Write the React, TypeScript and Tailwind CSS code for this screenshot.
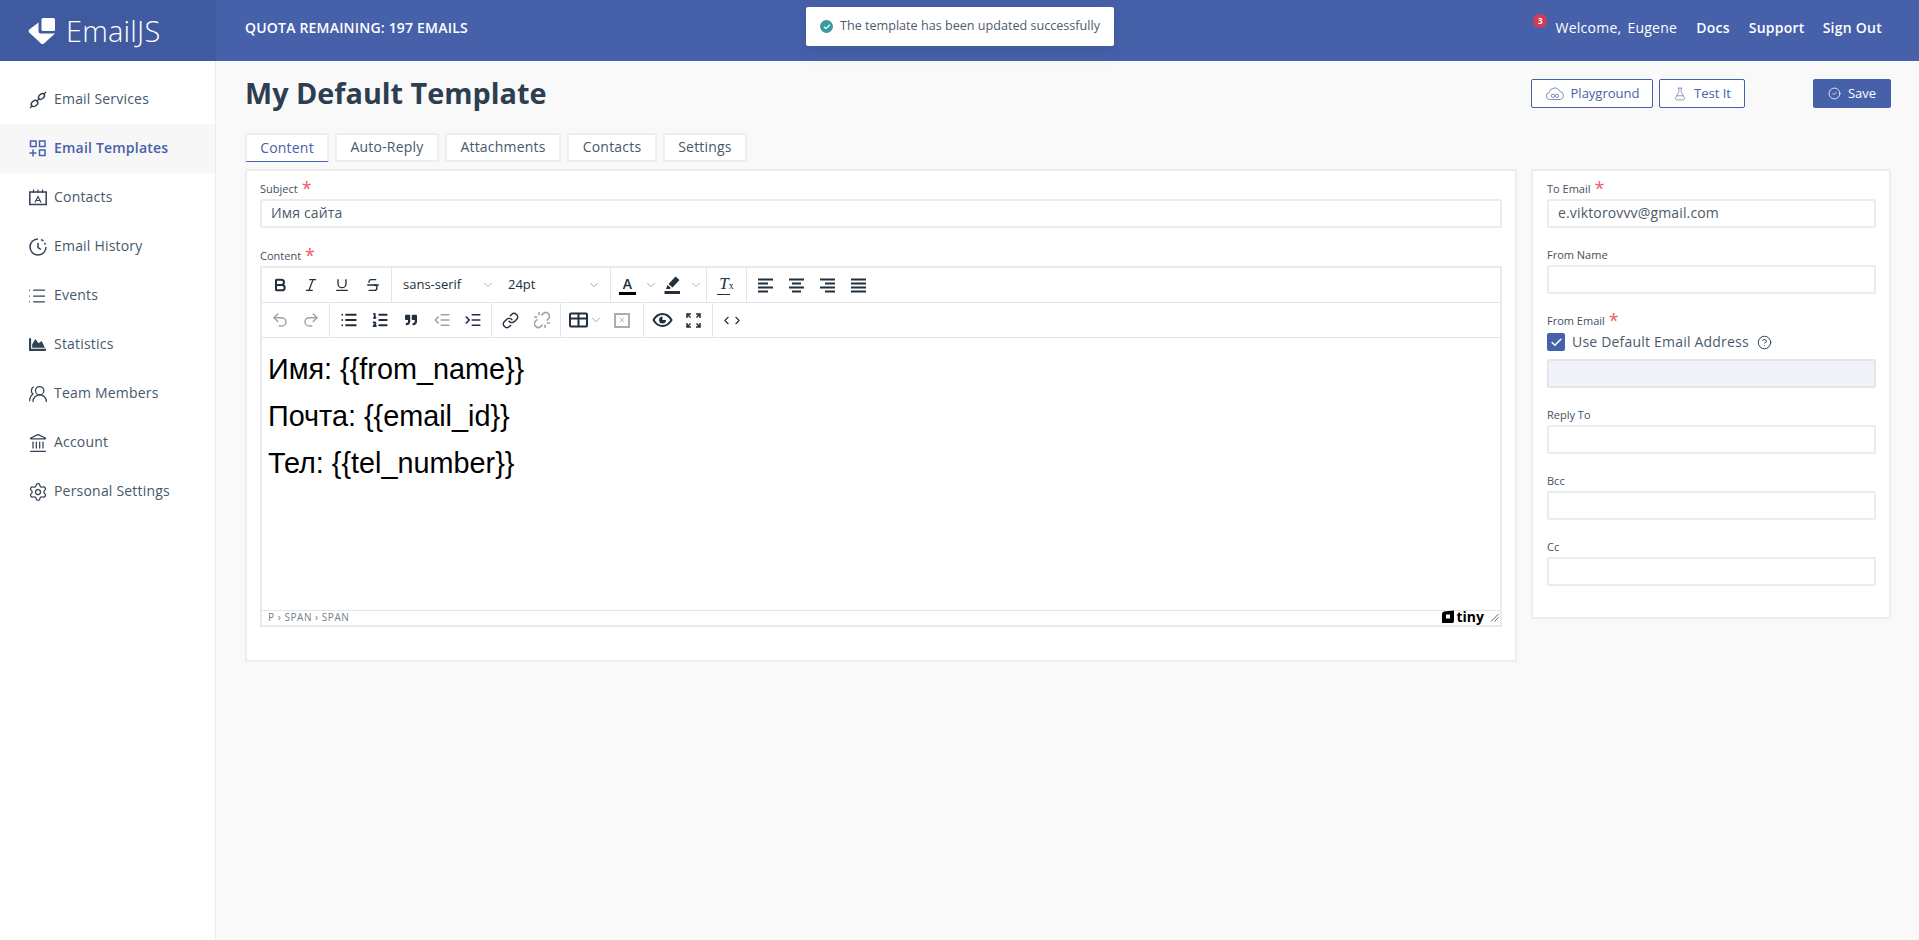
import React from 'react';
import {
  Bold, Check, CheckCircle2, ChevronDown, ChevronLeft, ChevronRight, FlaskConical, HelpCircle, IndentDecrease,
  IndentIncrease, Italic, Landmark, Link, List, ListOrdered, Redo2, Settings, Strikethrough, Underline, Undo2, Unlink,
  UsersRound, X,
} from 'lucide-react';
import { FaChartArea, FaQuoteRight } from 'react-icons/fa';

const EmailServicesIcon = () => (
  <svg width="18" height="18" viewBox="0 0 18 18" fill="none" stroke="currentColor" strokeWidth="1.400">
    <path d="M1 17l2.500-2.500M14.500 3.500L17 1M7.500 10.500l3-3" />
    <ellipse cx="12.500" cy="5.500" rx="3.400" ry="2.300" transform="rotate(-40 12.500 5.500)" />
    <ellipse cx="5.500" cy="12.500" rx="3.600" ry="2.600" transform="rotate(-40 5.500 12.500)" />
  </svg>
);

const TemplatesIcon = () => (
  <svg width="17" height="17" viewBox="0 0 17 17" fill="none" stroke="currentColor" strokeWidth="1.500">
    <rect x="1.500" y="1" width="5.500" height="5.500" />
    <rect x="10.500" y="1" width="5.500" height="5.500" />
    <rect x="10.500" y="10" width="5.500" height="5.500" />
    <path d="M0.500 13h7M4 9.500V16.500" />
  </svg>
);

const ContactsIcon = () => (
  <svg width="18" height="17" viewBox="0 0 18 17" fill="none" stroke="currentColor" strokeWidth="1.500">
    <rect x="0.800" y="3" width="16.400" height="12.500" />
    <path d="M4.500 0.500v3.500M9 0.500v3.500M13.500 0.500v3.500M6 13.500l3-6 3 6M7 11.500h4" strokeWidth="1.200" />
  </svg>
);

const HistoryIcon = () => (
  <svg width="18" height="18" viewBox="0 0 18 18" fill="none" stroke="currentColor" strokeWidth="1.500">
    <path d="M9 1a8 8 0 1 0 8 8M9 5v4.500l3 2" />
    <path d="M12 1.600l2.500 1.200M15.500 5l1 1.500" />
  </svg>
);

const LogoIcon = () => (
  <svg width="28" height="28" viewBox="0 0 28 28" fill="white">
    <rect x="13.500" y="1" width="13.500" height="13" rx="1.500" />
    <path d="M10.500 5.500v8.500q0 2.500 2.500 2.500h14l-11 10q-1.500 1-3 0L1.200 15.500q-1.200-1.500 0-3z" />
  </svg>
);

const PenIcon = () => (
  <svg width="20" height="20" viewBox="0 0 20 20" fill="#222f3e">
    <path d="M12.500 1.500l4 3.500-7 7.500-4-3.500zM4.500 10l3.500 3-1.500 1H3zM1.500 16h15.500v3H1.500z" />
  </svg>
);

const TinyMark = () => (
  <svg width="14" height="14" viewBox="0 0 14 14">
    <path d="M3 1.500L13 0.500V11q0 2-2 2H1V4q0-2 2-2.500z" fill="#000" />
    <rect x="5" y="4.500" width="4" height="4" fill="#fff" />
  </svg>
);

const ResizeGrip = () => (
  <svg width="9" height="9" viewBox="0 0 9 9" stroke="#5c6b73" strokeWidth="1">
    <path d="M1 8.500L8.500 1M4.500 8.500L8.500 4.500" />
  </svg>
);

const AlignIcon = ({ rows }: { rows: [number, number][] }) => (
  <svg width="16" height="16" viewBox="0 0 16 16" fill="#222f3e">
    {rows.map(([x, w], i) => (
      <rect key={i} x={x} y={1.500 + i * 4} width={w} height="2" />
    ))}
  </svg>
);

const TableIcon = () => (
  <svg width="19" height="16" viewBox="0 0 19 16" fill="none" stroke="#222f3e" strokeWidth="2">
    <rect x="1" y="1.500" width="17" height="13" rx="1" />
    <path d="M1 6.500h17M9.500 1.500v13" />
  </svg>
);

const EyeIcon = () => (
  <svg width="21" height="16" viewBox="0 0 21 16">
    <path d="M1.500 8q3.500-6 9-6t9 6q-3.500 6-9 6t-9-6z" fill="none" stroke="#222f3e" strokeWidth="2" />
    <path d="M10.500 4.500a3.500 3.500 0 1 0 3.500 3.500h-3.500z" fill="#222f3e" />
  </svg>
);

const FullscreenIcon = () => (
  <svg width="15" height="15" viewBox="0 0 15 15" fill="none" stroke="#222f3e" strokeWidth="1.500">
    <path d="M1 5V1h4M14 5V1h-4M1 10v4h4M14 10v4h-4M1.500 1.500l3 3M13.500 1.500l-3 3M1.500 13.500l3-3M13.500 13.500l-3-3" />
  </svg>
);

const PlaygroundIcon = () => (
  <svg width="20" height="15" viewBox="0 0 20 15" fill="none" stroke="#7f8fbd" strokeWidth="1">
    <path d="M4.500 13.500a3.500 3.500 0 0 1-.5-6.900 5.800 5.800 0 0 1 11-1.100 4.100 4.100 0 0 1 .5 8z" />
    <circle cx="8" cy="9.800" r="1.700" />
    <circle cx="12" cy="9.800" r="1.700" />
  </svg>
);

const navItems = [
  { label: 'Email Services', icon: <EmailServicesIcon /> },
  { label: 'Email Templates', icon: <TemplatesIcon />, active: true },
  { label: 'Contacts', icon: <ContactsIcon /> },
  { label: 'Email History', icon: <HistoryIcon /> },
  { label: 'Events', icon: <List size={20} strokeWidth={1.500} className="-ml-[2px]" /> },
  { label: 'Statistics', icon: <FaChartArea size={17} /> },
  { label: 'Team Members', icon: <UsersRound size={20} strokeWidth={1.500} className="-ml-[1px] -scale-x-100" /> },
  { label: 'Account', icon: <Landmark size={20} strokeWidth={1.500} className="-ml-[1px]" /> },
  { label: 'Personal Settings', icon: <Settings size={20} strokeWidth={1.500} className="-ml-[1px]" /> },
];

const tabs = [
  { label: 'Content', width: 'w-[84px]' },
  { label: 'Auto-Reply', width: 'w-[104px]' },
  { label: 'Attachments', width: 'w-[116px]' },
  { label: 'Contacts', width: 'w-[90px]' },
  { label: 'Settings', width: 'w-[84px]' },
];

const Star = () => <span className="-mt-[2px] ml-1 text-[18px] leading-none text-[#ef5b6c]">*</span>;

const Label = ({ text, required }: { text: string; required?: boolean }) => (
  <div className="-mt-[1px] flex h-[18px] items-start text-[11px] leading-[15px] text-[#43505f]">
    {text}
    {required && <Star />}
  </div>
);

const Input = ({ value, disabled }: { value?: string; disabled?: boolean }) => (
  <div className={`flex h-[29px] items-center rounded-[2px] border-2 px-[9px] pb-[2px] text-[14px] tracking-[0.15px] text-[#4c5b6b] ${disabled ? 'border-[#e2e5ea] bg-[#f1f3f8]' : 'border-[#eaecee] bg-white'}`}>
    {value}
  </div>
);

const Group = ({ children, last }: { children: React.ReactNode; last?: boolean }) => (
  <div className={`flex h-full items-center px-[3px] ${last ? '' : 'border-r border-[#e3e5e8]'}`}>{children}</div>
);

const Btn = ({ children, off }: { children: React.ReactNode; off?: boolean }) => (
  <div className={`flex h-[28px] w-[31px] items-center justify-center ${off ? 'text-[#9aa3ab]' : 'text-[#222f3e]'}`}>{children}</div>
);

const Caret = () => <ChevronDown size={14} strokeWidth={1.500} className="shrink-0 text-[#9aa3ab]" />;

const Toolbar = () => (
  <>
    <div className="flex h-[35px] border-b border-[#e3e5e8]">
      <div className="flex h-full items-center border-r border-[#e3e5e8] pl-[2px] pr-[3px]">
        <Btn><Bold size={16} strokeWidth={3} /></Btn>
        <Btn><Italic size={16} strokeWidth={1.800} /></Btn>
        <Btn><Underline size={16} strokeWidth={2} /></Btn>
        <Btn><Strikethrough size={16} strokeWidth={2} /></Btn>
      </div>
      <div className="flex h-full items-center border-r border-[#e3e5e8] pr-[3px] text-[13px] text-[#222f3e]">
        <div className="flex h-[28px] w-[109px] items-center justify-between pl-[11px] pr-[6px]">
          sans-serif
          <Caret />
        </div>
        <div className="flex h-[28px] w-[106px] items-center justify-between pl-[7px] pr-[6px]">
          24pt
          <Caret />
        </div>
      </div>
      <Group>
        <div className="flex items-center pl-[5px]">
          <div className="flex w-[17px] flex-col items-center text-[14px] font-semibold leading-[15px] text-[#222f3e]">
            A
            <span className="mt-[1px] h-[3px] w-[17px] bg-black"></span>
          </div>
          <div className="ml-[8px]"><Caret /></div>
        </div>
        <div className="ml-[5px] flex items-center gap-[6px]">
          <PenIcon />
          <Caret />
        </div>
      </Group>
      <Group>
        <div className="flex w-[33px] flex-col items-center">
          <div className="font-['Liberation_Serif',serif] text-[17px] italic leading-[16px] text-[#222f3e]">
            T<span className="text-[10px] not-italic">x</span>
          </div>
          <span className="mr-[6px] h-[1px] w-[13px] bg-[#222f3e]"></span>
        </div>
      </Group>
      <Group last>
        <Btn><AlignIcon rows={[[0, 15], [0, 10], [0, 15], [0, 10]]} /></Btn>
        <Btn><AlignIcon rows={[[0, 15], [3, 9], [0, 15], [3, 9]]} /></Btn>
        <Btn><AlignIcon rows={[[0, 15], [5, 10], [0, 15], [5, 10]]} /></Btn>
        <Btn><AlignIcon rows={[[0, 15], [0, 15], [0, 15], [0, 15]]} /></Btn>
      </Group>
    </div>
    <div className="flex h-[35px] border-b border-[#e3e5e8]">
      <div className="flex h-full items-center border-r border-[#e3e5e8] pl-[2px] pr-[3px]">
        <Btn off><Undo2 size={18} strokeWidth={2} /></Btn>
        <Btn off><Redo2 size={18} strokeWidth={2} /></Btn>
      </div>
      <Group>
        <Btn><List size={18} strokeWidth={2.400} /></Btn>
        <Btn><ListOrdered size={18} strokeWidth={2.400} /></Btn>
        <Btn><FaQuoteRight size={12} /></Btn>
        <Btn off><IndentDecrease size={18} strokeWidth={2.200} /></Btn>
        <Btn><IndentIncrease size={18} strokeWidth={2.200} /></Btn>
      </Group>
      <Group>
        <Btn><Link size={17} strokeWidth={2} /></Btn>
        <Btn off><Unlink size={18} strokeWidth={2} /></Btn>
      </Group>
      <Group>
        <div className="flex w-[44px] items-center justify-center gap-[1px]">
          <TableIcon />
          <Caret />
        </div>
        <div className="flex h-[28px] w-[32px] items-center justify-start pl-[6px]">
          <div className="flex h-[15px] w-[16px] items-center justify-center border-2 border-[#a6afb6] text-[#a6afb6]">
            <X size={8} strokeWidth={2.500} />
          </div>
        </div>
      </Group>
      <Group>
        <Btn><EyeIcon /></Btn>
        <Btn><FullscreenIcon /></Btn>
      </Group>
      <Group last>
        <Btn>
          <ChevronLeft size={13} strokeWidth={2} className="-mr-[1px]" />
          <ChevronRight size={13} strokeWidth={2} className="-ml-[1px]" />
        </Btn>
      </Group>
    </div>
  </>
);

const App = () => {
  return (
    <div className="relative flex min-h-screen flex-col bg-[#f9f9f9] font-['Open_Sans',sans-serif]">
      <header className="flex h-[61px] shrink-0 bg-[#4661aa] text-white">
        <div className="flex w-[216px] items-center gap-[10px] bg-[#3f5a9e] pl-[28px]">
          <LogoIcon />
          <span className="text-[29px] font-light leading-none tracking-[0.2px]">EmailJS</span>
        </div>
        <div className="flex flex-1 items-center pb-[6px] pl-[29px] text-[14px] font-semibold tracking-[0.2px]">QUOTA REMAINING: 197 EMAILS</div>
        <div className="flex items-center pb-[6px] pr-[37px] text-[14px] tracking-[0.25px]">
          <div className="relative mr-[19px] flex gap-[6px]">
            <span className="absolute -left-[22px] -top-[3px] flex h-[14px] w-[14px] items-center justify-center rounded-full bg-[#d33c52] text-[8px] font-bold">3</span>
            <span>Welcome,</span>
            <span>Eugene</span>
          </div>
          <span className="mr-[19px] font-semibold">Docs</span>
          <span className="mr-[18px] font-semibold">Support</span>
          <span className="font-semibold">Sign Out</span>
        </div>
      </header>

      <div className="absolute left-[806px] top-[7px] flex h-[39px] w-[308px] items-center gap-[7px] rounded-[2px] bg-white pl-[14px] text-[12.600px] text-[#4d5b6d] shadow-[0_4px_16px_rgba(30,50,100,0.2)]">
        <span className="flex h-[13px] w-[13px] items-center justify-center rounded-full bg-[#3a9a9f] text-white">
          <Check size={8} strokeWidth={3.500} />
        </span>
        The template has been updated successfully
      </div>

      <div className="flex flex-1">
        <aside className="w-[216px] shrink-0 border-r border-[#ececec] bg-white pt-[14px]">
          {navItems.map(item => (
            <div
              key={item.label}
              className={`flex h-[49px] items-center text-[14px] tracking-[0.2px] ${item.active ? 'bg-[#f7f7f7] font-semibold text-[#4661aa]' : 'text-[#47586b]'}`}
            >
              <span className={`flex w-[54px] justify-start pl-[29px] ${item.active ? 'text-[#4661aa]' : 'text-[#344256]'}`}>
                {item.icon}
              </span>
              <span className="-mt-[2px]">{item.label}</span>
            </div>
          ))}
        </aside>

        <main className="min-w-0 flex-1 pl-[29px] pr-[28px]">
          <div className="flex h-[72px] items-start justify-between">
            <h1 className="mt-[11px] text-[28.800px] font-bold leading-[42px] text-[#2c3e50]">My Default Template</h1>
            <div className="mt-[18px] flex">
              <div className="flex h-[29px] w-[122px] items-center justify-center gap-[6px] rounded-[2px] border border-[#4661aa] bg-white text-[13px] text-[#4661aa]">
                <PlaygroundIcon />
                Playground
              </div>
              <div className="ml-[6px] flex h-[29px] w-[86px] items-center justify-center gap-[7px] rounded-[2px] border border-[#4661aa] bg-white text-[13px] text-[#4661aa]">
                <FlaskConical size={14} strokeWidth={1.500} className="text-[#7f8fbd]" />
                Test It
              </div>
              <div className="ml-[68px] flex h-[29px] w-[78px] items-center justify-center gap-[7px] rounded-[2px] bg-[#4661aa] text-[13px] text-white">
                <CheckCircle2 size={13} strokeWidth={1.500} />
                Save
              </div>
            </div>
          </div>

          <div className="flex gap-[6px]">
            {tabs.map((tab, i) => (
              <div
                key={tab.label}
                className={`flex h-[29px] items-center justify-center border-2 border-[#eeeeee] bg-white pb-[2px] text-[14px] tracking-[0.2px] ${tab.width} ${i === 0 ? 'border-b-[1.500px] border-b-[#4661aa] text-[#4661aa]' : 'text-[#47586b]'}`}
              >
                {tab.label}
              </div>
            ))}
          </div>

          <div className="mt-[7px] flex items-start gap-[14px]">
            <section className="h-[493px] w-[1272px] shrink-0 border-2 border-[#eeeeee] bg-white px-[13px] pt-[11px]">
              <Label text="Subject" required />
              <Input value="Имя сайта" />
              <div className="mt-[21px]">
                <Label text="Content" required />
              </div>
              <div className="h-[361px] border-2 border-[#e8eaec]">
                <Toolbar />
                <div className="h-[272px] pl-[6px] pt-[8px] font-['Liberation_Sans',sans-serif] text-[28.800px] leading-[47px] text-black">
                  <p>Имя: {'{{from_name}}'}</p>
                  <p>Почта: {'{{email_id}}'}</p>
                  <p>Тел: {'{{tel_number}}'}</p>
                </div>
                <div className="flex h-[17px] items-center justify-between border-t border-[#e3e5e8] pb-[4px] pl-[6px] pr-[1px] text-[10px] tracking-[0.55px] text-[#6f8288]">
                  P › SPAN › SPAN
                  <div className="flex items-center gap-[6px]">
                    <div className="flex items-center gap-[1px] text-[14px] font-bold leading-none tracking-normal text-black">
                      <TinyMark />
                      tiny
                    </div>
                    <ResizeGrip />
                  </div>
                </div>
              </div>
            </section>

            <section className="h-[450px] flex-1 border-2 border-[#eeeeee] bg-white pl-[14px] pr-[13px] pt-[11px]">
              <Label text="To Email" required />
              <Input value="e.viktorovvv@gmail.com" />
              <div className="mt-[20px]">
                <Label text="From Name" />
                <Input />
              </div>
              <div className="mt-[20px]">
                <Label text="From Email" required />
                <div className="mt-[2px] flex h-[18px] items-center gap-[7px] text-[14px] tracking-[0.2px] text-[#4c5b6b]">
                  <span className="flex h-[18px] w-[18px] items-center justify-center rounded-[2px] bg-[#4661aa] text-white">
                    <Check size={13} strokeWidth={3} />
                  </span>
                  <span className="-mt-[2px]">Use Default Email Address</span>
                  <HelpCircle size={15} strokeWidth={1.600} className="ml-[1px] text-[#344256]" />
                </div>
                <div className="mt-[8px]">
                  <Input disabled />
                </div>
              </div>
              <div className="mt-[20px]">
                <Label text="Reply To" />
                <Input />
              </div>
              <div className="mt-[20px]">
                <Label text="Bcc" />
                <Input />
              </div>
              <div className="mt-[20px]">
                <Label text="Cc" />
                <Input />
              </div>
            </section>
          </div>
        </main>
      </div>
    </div>
  );
};

export default App;
